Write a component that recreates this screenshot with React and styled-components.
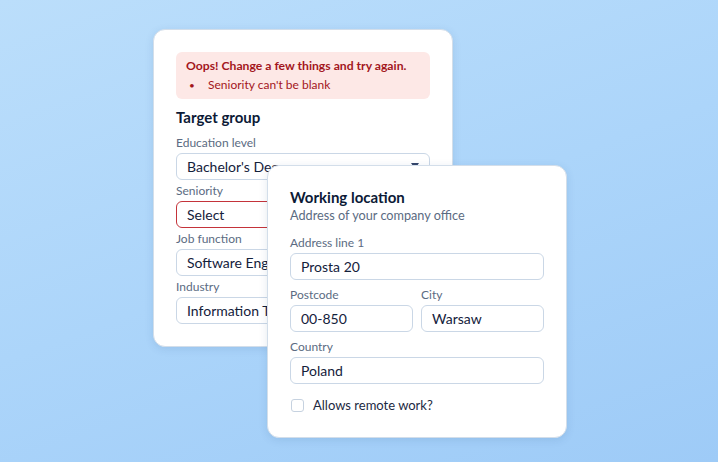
import React from "react";
import styled, { createGlobalStyle } from "styled-components";

const Global = createGlobalStyle`
  html, body { margin: 0; padding: 0; }
  body {
    font-family: Lato, "Noto Sans", sans-serif;
    width: 718px;
    height: 462px;
    overflow: hidden;
  }
  * { box-sizing: border-box; }
`;

const Stage = styled.div`
  position: relative;
  width: 718px;
  height: 462px;
  background: linear-gradient(160deg, #bbdefb 0%, #acd5fa 50%, #9ecbf7 100%);
  overflow: hidden;
`;

const Card = styled.div`
  position: absolute;
  left: ${(p) => p.$x}px;
  top: ${(p) => p.$y}px;
  width: 300px;
  background: #ffffff;
  border: 1px solid #d3deea;
  border-radius: 12px;
  box-shadow: 0 2px 8px rgba(30, 70, 120, 0.12);
  padding: ${(p) => p.$pad};
  display: flex;
  flex-direction: column;
`;

const ErrorBox = styled.div`
  background: #fde8e6;
  border-radius: 6px;
  padding: 6px 10px;
  display: flex;
  flex-direction: column;
  gap: 3px;
  color: #a3161c;
  font-size: 12px;
  line-height: 16px;
  margin-bottom: 8px;
`;

const ErrorTitle = styled.div`
  font-weight: 700;
  font-size: 12.2px;
`;

const ErrorItem = styled.div`
  display: flex;
  &::before {
    content: "•";
    width: 19px;
    padding-left: 3px;
    font-size: 10px;
    flex: none;
  }
`;

const Title = styled.h2`
  margin: 0;
  font-size: 15px;
  line-height: 20px;
  font-weight: 700;
  color: #0c1a36;
  margin-bottom: ${(p) => p.$mb || 0}px;
`;

const Subtitle = styled.p`
  margin: 0 0 12px;
  font-size: 12.7px;
  line-height: 16px;
  color: #5b6b82;
`;

const Fields = styled.div`
  display: flex;
  flex-direction: column;
  gap: ${(p) => p.$gap}px;
`;

const Row = styled.div`
  display: grid;
  grid-template-columns: 1fr 1fr;
  gap: 8px;
`;

const Field = styled.div`
  display: flex;
  flex-direction: column;
  gap: 2px;
  min-width: 0;
`;

const Label = styled.label`
  font-size: 12px;
  line-height: 16px;
  color: #5b6b82;
`;

const Input = styled.div`
  position: relative;
  height: 27px;
  border: 1px solid ${(p) => (p.$error ? "#c4333a" : "#cad7e6")};
  border-radius: 6px;
  padding: 0 10px;
  display: flex;
  align-items: center;
  font-size: 14px;
  color: #14213b;
  background: #fff;
  white-space: nowrap;
  overflow: hidden;
`;

const Caret = styled.span`
  position: absolute;
  right: 10px;
  top: 9px;
  width: 0;
  height: 0;
  border-left: 4px solid transparent;
  border-right: 4px solid transparent;
  border-top: 6px solid #34456a;
`;

const CheckRow = styled.div`
  display: flex;
  align-items: center;
  gap: 9px;
  margin-top: 13px;
  padding-left: 1px;
  font-size: 13px;
  color: #1c2942;
`;

const Box = styled.span`
  width: 13px;
  height: 13px;
  border: 1px solid #c6d2e0;
  border-radius: 3px;
  background: #fff;
  flex: none;
`;

const InputField = ({ label, value, error, select }) => (
  <Field>
    <Label>{label}</Label>
    <Input $error={error}>
      {value}
      {select && <Caret />}
    </Input>
  </Field>
);

export default function App() {
  return (
    <>
      <Global />
      <Stage>
        <Card $x={153} $y={29} $pad="22px 22px 22px">
          <ErrorBox>
            <ErrorTitle>Oops! Change a few things and try again.</ErrorTitle>
            <ErrorItem>Seniority can't be blank</ErrorItem>
          </ErrorBox>
          <Title $mb={8}>Target group</Title>
          <Fields $gap={3}>
            <InputField label="Education level" value="Bachelor's Degree" select />
            <InputField label="Seniority" value="Select" error select />
            <InputField label="Job function" value="Software Engineering" select />
            <InputField label="Industry" value="Information Technology" select />
          </Fields>
        </Card>
        <Card $x={267} $y={165} $pad="21px 22px 24px">
          <Title>Working location</Title>
          <Subtitle>Address of your company office</Subtitle>
          <Fields $gap={7}>
            <InputField label="Address line 1" value="Prosta 20" />
            <Row>
              <InputField label="Postcode" value="00-850" />
              <InputField label="City" value="Warsaw" />
            </Row>
            <InputField label="Country" value="Poland" />
          </Fields>
          <CheckRow>
            <Box />
            Allows remote work?
          </CheckRow>
        </Card>
      </Stage>
    </>
  );
}
